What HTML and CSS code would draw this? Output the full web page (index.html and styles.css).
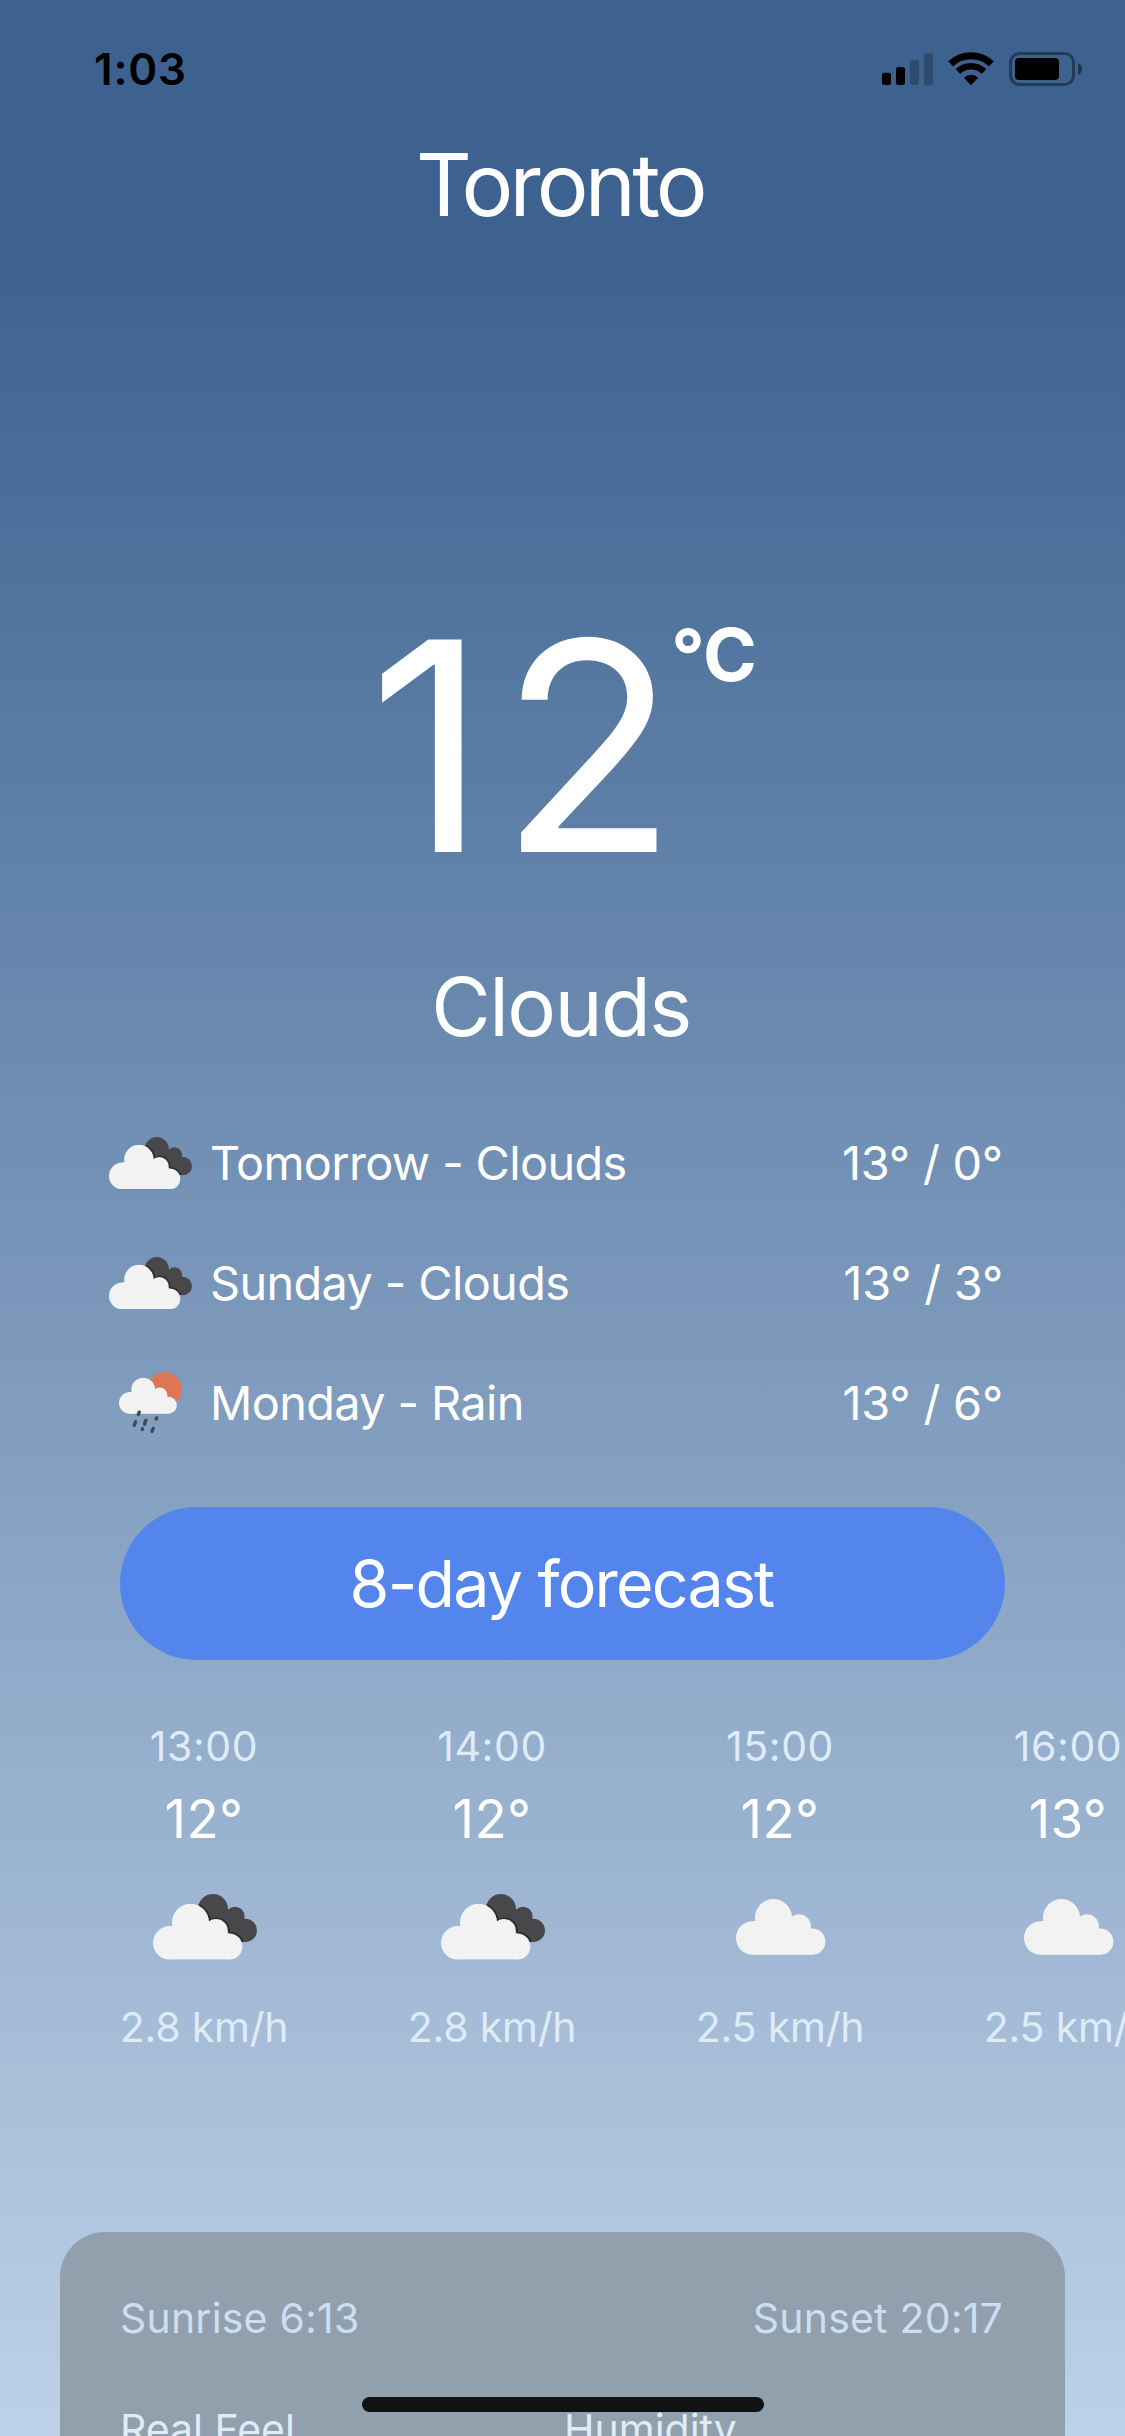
FILE: index.html
```html
<!DOCTYPE html>
<html lang="en">
<head>
<meta charset="utf-8">
<title>Toronto</title>
<link rel="stylesheet" href="styles.css">
</head>
<body>
<svg class="sprite" aria-hidden="true">
  <clipPath id="dark-shape">
    <circle cx="60" cy="15" r="15"/>
    <circle cx="82" cy="22.4" r="9.6"/>
    <circle cx="92.4" cy="36.4" r="11.6"/>
    <path d="M60 10L75 15V16.5L91.3 22V25.3L92 48H84L50 26Z"/>
  </clipPath>
  <symbol id="cloud" viewBox="0 0 90 56">
    <g fill="#f2f2f2">
      <circle cx="16.8" cy="39" r="16.8"/>
      <circle cx="37.5" cy="18.5" r="18.5"/>
      <circle cx="63" cy="27" r="11.8"/>
      <circle cx="76.3" cy="42.7" r="13.1"/>
      <path d="M16.8 22.2H19L37 12L55 18L74.5 27V29.7H76.3L82 42L76.3 55.8H16.8Z"/>
    </g>
  </symbol>
  <symbol id="clouds" viewBox="0 0 104 66">
    <g clip-path="url(#dark-shape)">
      <rect width="104" height="66" fill="#48484a"/>
      <g fill="none" stroke="#2c2c2e" stroke-width="3">
        <circle cx="38.1" cy="28.3" r="18.5"/>
        <circle cx="63.6" cy="36.8" r="11.8"/>
        <circle cx="76.9" cy="52.5" r="13.1"/>
      </g>
    </g>
    <use href="#cloud" x="0" y="9.8" width="90" height="56"/>
  </symbol>
  <symbol id="rain" viewBox="0 0 64 62">
    <circle cx="45.6" cy="17.2" r="17.1" fill="#dc7656"/>
    <use href="#cloud" x="0" y="5.6" width="58.2" height="36.4"/>
    <g stroke="#48484a" stroke-width="3.4" stroke-linecap="round">
      <path d="M20.2 40.2L19.4 42.4M16.6 49.8L15.2 53.4M26.9 48.4L25.5 52.2M37.7 45.9L37.2 47M23.6 56.8L23.2 57.6M34.2 56.3L33 59.4"/>
    </g>
  </symbol>
</svg>

<main class="screen">
  <header class="status">
    <span class="status-time">1:03</span>
    <span class="status-icons">
      <svg class="signal" width="51" height="34" viewBox="0 0 51 34">
        <rect x="0" y="20.7" width="9" height="12.3" rx="2.5"/>
        <rect x="14" y="15" width="9" height="18" rx="2.5"/>
        <rect x="28" y="8" width="9" height="25" rx="2.5" opacity=".24"/>
        <rect x="42" y="1" width="9" height="32" rx="2.5" opacity=".24"/>
      </svg>
      <svg class="wifi" width="46" height="34" viewBox="0 0 46 34">
        <path d="M.2 9.3A33 33 0 0 1 45.8 9.3L40.9 14.4A26 26 0 0 0 5.1 14.4ZM7.7 17.1A22.2 22.2 0 0 1 38.3 17.1L33.8 21.9A15.6 15.6 0 0 0 12.2 21.9ZM15.9 25.7A10.3 10.3 0 0 1 30.1 25.7L23 33.2Z"/>
      </svg>
      <svg class="battery" width="73" height="34" viewBox="0 0 73 34">
        <rect x="1.5" y="1.5" width="63" height="31" rx="9" fill="none" stroke="#000" stroke-width="3" opacity=".4"/>
        <rect x="6" y="6" width="44" height="22" rx="4"/>
        <path d="M69 11Q73 13 73 17T69 23Z" opacity=".45"/>
      </svg>
    </span>
  </header>

  <h1 class="city">Toronto</h1>

  <section class="current">
    <div class="temp"><span class="temp-value">12</span><span class="temp-unit">°C</span></div>
    <p class="condition">Clouds</p>
  </section>

  <section class="days">
    <div class="day"><span class="day-icon"><svg width="83" height="52.7"><use href="#clouds"/></svg></span><span class="day-name">Tomorrow - Clouds</span><span class="day-range">13° / 0°</span></div>
    <div class="day"><span class="day-icon"><svg width="83" height="52.7"><use href="#clouds"/></svg></span><span class="day-name">Sunday - Clouds</span><span class="day-range">13° / 3°</span></div>
    <div class="day"><span class="day-icon"><svg width="64" height="62"><use href="#rain"/></svg></span><span class="day-name">Monday - Rain</span><span class="day-range">13° / 6°</span></div>
  </section>

  <button class="forecast" type="button">8-day forecast</button>

  <section class="hours">
    <div class="hour"><span class="hour-time">13:00</span><span class="hour-temp">12°</span><span class="hour-icon"><svg width="104" height="66"><use href="#clouds"/></svg></span><span class="hour-wind">2.8 km/h</span></div>
    <div class="hour"><span class="hour-time">14:00</span><span class="hour-temp">12°</span><span class="hour-icon"><svg width="104" height="66"><use href="#clouds"/></svg></span><span class="hour-wind">2.8 km/h</span></div>
    <div class="hour"><span class="hour-time">15:00</span><span class="hour-temp">12°</span><span class="hour-icon"><svg width="90" height="56"><use href="#cloud"/></svg></span><span class="hour-wind">2.5 km/h</span></div>
    <div class="hour"><span class="hour-time">16:00</span><span class="hour-temp">13°</span><span class="hour-icon"><svg width="90" height="56"><use href="#cloud"/></svg></span><span class="hour-wind">2.5 km/h</span></div>
  </section>

  <section class="details">
    <div class="sun"><span>Sunrise 6:13</span><span>Sunset 20:17</span></div>
    <div class="stats"><span>Real Feel</span><span class="stat-humidity">Humidity</span></div>
  </section>

  <div class="home-indicator"></div>
</main>
</body>
</html>
```
FILE: styles.css
```css
* { box-sizing: border-box; }

body {
  margin: 0;
  font-family: Inter, "Liberation Sans", sans-serif;
  color: #fff;
}

.sprite {
  position: absolute;
  width: 0;
  height: 0;
}

.screen {
  position: relative;
  display: flex;
  flex-direction: column;
  width: 1125px;
  height: 2436px;
  overflow: hidden;
  background: linear-gradient(#3d628f 0, #3d628f 250px, #4c709b 520px, #bdd1e8 2436px);
}

.screen > * { flex-shrink: 0; }

svg { display: block; }

/* Status bar */
.status {
  display: flex;
  align-items: center;
  justify-content: space-between;
  height: 138px;
  padding: 0 43px 0 94px;
  color: #000;
}

.status-time {
  font-size: 44px;
  font-weight: 600;
  letter-spacing: 0.8px;
}

.status-icons { display: flex; gap: 15px; }

/* Current weather */
.city {
  margin: 0;
  padding-right: 5px;
  font-size: 86.5px;
  font-weight: 400;
  line-height: 94px;
  letter-spacing: -3.8px;
  text-align: center;
}

.current { margin-top: 364px; }

.temp {
  display: flex;
  align-items: flex-start;
  justify-content: center;
}

.temp-value {
  font-size: 292px;
  line-height: 300px;
  letter-spacing: 12px;
}

.temp-unit {
  margin: 19px 0 0 -18px;
  font-size: 73px;
  font-weight: 700;
  line-height: 80px;
  letter-spacing: -0.5px;
}

.condition {
  margin: 60px 0 0;
  padding-right: 3px;
  font-size: 81.5px;
  line-height: 101px;
  letter-spacing: -1.65px;
  text-align: center;
}

/* Next days */
.days {
  margin-top: 46px;
  padding: 0 122px 0 104px;
  font-size: 46.8px;
}

.day {
  display: flex;
  align-items: center;
  height: 120px;
}

.day-icon {
  display: flex;
  justify-content: center;
  width: 93px;
  margin-right: 13px;
}

.day-name {
  flex: 1;
  letter-spacing: -0.6px;
}

.day-range { letter-spacing: -0.2px; }

.forecast {
  height: 153px;
  margin: 44px 120px 0;
  padding: 0 2px 0 0;
  border: 0;
  border-radius: 77px;
  background: #5385ec;
  color: #fff;
  font: 400 64.5px/78px Inter, "Liberation Sans", sans-serif;
  letter-spacing: -1.8px;
}

/* Hourly strip */
.hours {
  display: flex;
  gap: 120px;
  margin-top: 61px;
  padding-left: 120px;
}

.hour {
  display: flex;
  flex: none;
  flex-direction: column;
  align-items: center;
  width: 168px;
  white-space: nowrap;
}

.hour-time,
.hour-wind {
  color: #dfebf7;
  font-size: 41px;
  line-height: 50px;
}

.hour-time { letter-spacing: 0.6px; }

.hour-wind { letter-spacing: -0.2px; }

.hour-temp {
  margin-top: 16px;
  font-size: 53px;
  line-height: 64px;
  letter-spacing: 0.3px;
}

.hour-icon {
  display: flex;
  align-items: center;
  height: 100px;
  margin: 26px 0 24.5px;
  padding-left: 1px;
}

/* Details card */
.details {
  height: 400px;
  margin: 180px 60px 0;
  padding: 61px 62px 0 60px;
  border-radius: 45px;
  background: #929fac;
  color: #cbdff0;
  font-size: 41px;
  line-height: 50px;
  letter-spacing: 0.2px;
}

.sun {
  display: flex;
  justify-content: space-between;
}

.stats {
  display: grid;
  grid-template-columns: 444px 1fr;
  margin-top: 61px;
  color: #dfecf7;
  letter-spacing: 0;
}

.home-indicator {
  position: absolute;
  left: 362px;
  bottom: 24px;
  width: 402px;
  height: 15px;
  border-radius: 8px;
  background: #111312;
}
```
